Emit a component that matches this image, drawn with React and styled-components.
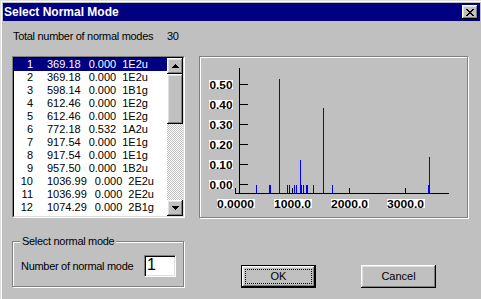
import React from 'react';
import styled, { createGlobalStyle } from 'styled-components';

const Global = createGlobalStyle`
  html, body { margin: 0; padding: 0; background: #c0c0c0; }
  body { font-family: "Liberation Sans", Arial, sans-serif; font-size: 11px; color: #000; }
`;

const modes = [
  [1, '369.18', '0.000', '1E2u'],
  [2, '369.18', '0.000', '1E2u'],
  [3, '598.14', '0.000', '1B1g'],
  [4, '612.46', '0.000', '1E2g'],
  [5, '612.46', '0.000', '1E2g'],
  [6, '772.18', '0.532', '1A2u'],
  [7, '917.54', '0.000', '1E1g'],
  [8, '917.54', '0.000', '1E1g'],
  [9, '957.50', '0.000', '1B2u'],
  [10, '1036.99', '0.000', '2E2u'],
  [11, '1036.99', '0.000', '2E2u'],
  [12, '1074.29', '0.000', '2B1g'],
  [13, '1140.22', '0.123', '1E1u'],
  [14, '1140.22', '0.123', '1E1u'],
  [15, '1156.20', '0.000', '1A1g'],
  [16, '1192.87', '0.000', '2E2g'],
  [17, '1250.11', '0.000', '2E2g'],
  [18, '1262.40', '0.000', '1B2g'],
  [19, '1369.55', '0.000', '2B2u'],
  [20, '1545.06', '0.385', '1A2u'],
  [21, '1704.33', '0.000', '3E2g'],
  [22, '1704.33', '0.000', '3E2g'],
  [23, '3401.52', '0.000', '3E2g'],
  [24, '3401.52', '0.000', '3E2g'],
  [25, '3404.18', '0.000', '2B1u'],
  [26, '3411.90', '0.000', '3B1g'],
  [27, '3413.65', '0.138', '2E1u'],
  [28, '3413.65', '0.138', '2E1u'],
  [29, '3417.02', '0.000', '2A1g'],
  [30, '3417.02', '0.000', '3E2g'],
];

const Window = styled.div`
  width: 481px;
  height: 299px;
  box-sizing: border-box;
  padding: 3px 1px 0 3px;
  background: #c0c0c0;
  box-shadow: inset 1px 1px #dfdfdf, inset 2px 2px #fff;
  overflow: hidden;
  display: flex;
  flex-direction: column;
`;

const TitleBar = styled.div`
  height: 18px;
  flex: none;
  background: #000080;
  display: flex;
  align-items: center;
  justify-content: space-between;
  padding: 0 2px 0 1px;
`;

const TitleText = styled.span`
  color: #fff;
  font-weight: bold;
  font-size: 12px;
  line-height: 18px;
`;

const Bevel = `
  background: #c0c0c0;
  box-shadow: inset -1px -1px #000, inset 1px 1px #fff, inset -2px -2px #808080, inset 2px 2px #dfdfdf;
`;

const CloseButton = styled.div`
  width: 16px;
  height: 14px;
  ${Bevel}
  display: flex;
  align-items: center;
  justify-content: center;
`;

const Body = styled.div`
  padding-left: 9px;
  display: flex;
  flex-direction: column;
`;

const Label = styled.span`
  letter-spacing: -0.3px;
  line-height: 13px;
  white-space: nowrap;
`;

const Header = styled.div`
  margin-top: 9px;
  padding-left: 1px;
  display: flex;
  line-height: 13px;
`;

const HeaderLabel = styled(Label)`
  width: 154px;
  flex: none;
`;

const Main = styled.div`
  margin-top: 13px;
  display: flex;
`;

const LeftCol = styled.div`
  width: 173px;
  display: flex;
  flex-direction: column;
`;

const ListOuter = styled.div`
  height: 162px;
  box-sizing: border-box;
  border: 1px solid;
  border-color: #808080 #fff #fff #808080;
  display: flex;
`;

const ListInner = styled.div`
  flex: 1;
  border: 1px solid;
  border-color: #000 #dfdfdf #dfdfdf #000;
  background: #fff;
  display: flex;
  overflow: hidden;
`;

const Rows = styled.div`
  flex: 1;
  overflow: hidden;
`;

const Row = styled.div`
  height: 13px;
  line-height: 13px;
  display: flex;
  white-space: nowrap;
  background: ${p => (p.$selected ? '#000080' : 'transparent')};
  color: ${p => (p.$selected ? '#fff' : '#000')};
`;

const NumCell = styled.span`
  width: 19px;
  text-align: right;
  flex: none;
`;

const FreqCell = styled.span`
  margin-left: 14px;
`;

const IntCell = styled.span`
  margin-left: 8px;
`;

const SymCell = styled.span`
  margin-left: 6px;
`;

const ScrollBar = styled.div`
  width: 16px;
  flex: none;
  display: flex;
  flex-direction: column;
`;

const ScrollButton = styled.div`
  width: 16px;
  height: 16px;
  flex: none;
  ${Bevel}
  display: flex;
  align-items: center;
  justify-content: center;
`;

const Thumb = styled.div`
  height: 50px;
  flex: none;
  ${Bevel}
`;

const Track = styled.div`
  flex: 1;
  background: repeating-conic-gradient(#c0c0c0 0 25%, #fff 0 50%) 0 0 / 2px 2px;
`;

const GroupBox = styled.div`
  position: relative;
  margin-top: 23px;
  width: 172px;
  height: 46px;
  box-sizing: border-box;
  border: 1px solid #808080;
  box-shadow: inset 1px 1px #fff, 1px 1px #fff;
`;

const GroupLabel = styled(Label)`
  position: absolute;
  top: -7px;
  left: 7px;
  padding: 0 2px;
  background: #c0c0c0;
`;

const GroupRow = styled.div`
  display: flex;
  align-items: center;
  padding: 13px 0 0 8px;
`;

const FieldLabel = styled(Label)`
  width: 123px;
  flex: none;
`;

const TextField = styled.div`
  width: 32px;
  height: 22px;
  box-sizing: border-box;
  border: 1px solid;
  border-color: #808080 #fff #fff #808080;
  box-shadow: inset 1px 1px #000, inset -1px -1px #dfdfdf;
  background: #fff;
  padding: 0 0 0 2px;
  font-size: 16px;
  line-height: 17px;
`;

const RightCol = styled.div`
  margin-left: 14px;
  display: flex;
  flex-direction: column;
`;

const ChartPanel = styled.div`
  width: 269px;
  height: 162px;
  box-sizing: border-box;
  border: 1px solid #808080;
  box-shadow: inset 1px 1px #fff, 1px 1px #fff;
`;

const ChartSvg = styled.svg`
  display: block;
`;

const ButtonRow = styled.div`
  margin-top: 47px;
  padding-left: 42px;
  display: flex;
  gap: 45px;
`;

const Button = styled.div`
  position: relative;
  width: 75px;
  height: 23px;
  box-sizing: border-box;
  ${Bevel}
  ${p => p.$default && `
    border: 1px solid #000;
  `}
  display: flex;
  align-items: center;
  justify-content: center;
  line-height: 13px;
`;

const FocusRing = styled.span`
  position: absolute;
  inset: 3px;
  border: 1px dotted #000;
`;

const ty = v => 183.5 - v * 199;
const fx = f => 235.7 + f * 0.05667;

function UpArrow() {
  return (
    <svg width="7" height="4" viewBox="0 0 7 4">
      <rect x="3" y="0" width="1" height="1" />
      <rect x="2" y="1" width="3" height="1" />
      <rect x="1" y="2" width="5" height="1" />
      <rect x="0" y="3" width="7" height="1" />
    </svg>
  );
}

function DownArrow() {
  return (
    <svg width="7" height="4" viewBox="0 0 7 4">
      <rect x="0" y="0" width="7" height="1" />
      <rect x="1" y="1" width="5" height="1" />
      <rect x="2" y="2" width="3" height="1" />
      <rect x="3" y="3" width="1" height="1" />
    </svg>
  );
}

function Chart() {
  const yTicks = [0.5, 0.4, 0.3, 0.2, 0.1, 0.0];
  const xTicks = [
    ['0.0000', 235.5],
    ['1000.0', 292.5],
    ['2000.0', 349.5],
    ['3000.0', 405.5],
  ];
  const font = { fontFamily: '"Liberation Sans", Arial, sans-serif', fontWeight: 'bold', fontSize: 11 };
  return (
    <ChartSvg width="267" height="160" viewBox="0 0 267 160">
      <g transform="translate(-200 -57)" shapeRendering="crispEdges">
        <rect x="239" y="68" width="1" height="126" fill="#000" />
        <rect x="235" y="193" width="214" height="1" fill="#000" />
        {yTicks.map(v => {
          const y = Math.round(ty(v));
          return (
            <g key={v}>
              <rect x="240" y={y} width="8" height="1" fill="#000" />
              <rect x="209" y={y - 4} width="24" height="9" fill="#fff" />
              <text x="221" y={y + 4.5} textAnchor="middle" textLength="23" lengthAdjust="spacingAndGlyphs" style={font}>
                {v.toFixed(2)}
              </text>
            </g>
          );
        })}
        {xTicks.map(([label, x]) => (
          <g key={label}>
            <rect x={Math.floor(x)} y="188" width="1" height="5" fill="#000" />
            <rect x={x - 19} y="199" width="38" height="9" fill="#fff" />
            <text x={x} y="207.5" textAnchor="middle" textLength="37" lengthAdjust="spacingAndGlyphs" style={font}>
              {label}
            </text>
          </g>
        ))}
        {modes.map(([n, f, v]) => {
          const x = Math.floor(fx(parseFloat(f)));
          const top = Math.round(ty(parseFloat(v))) + 1;
          return <rect key={n} x={x} y={top} width="1" height={193 - top} fill="#0000ff" />;
        })}
      </g>
    </ChartSvg>
  );
}

export default function App() {
  return (
    <>
      <Global />
      <Window>
        <TitleBar>
          <TitleText>Select Normal Mode</TitleText>
          <CloseButton>
            <svg width="8" height="7" viewBox="0 0 8 7" shapeRendering="crispEdges">
              <path d="M0 0h2v1h1v1h2V1h1V0h2v1H7v1H6v1H5v1h1v1h1v1h1v1H6V6H5V5H3v1H2v1H0V6h1V5h1V4h1V3H2V2H1V1H0z" fill="#000" />
            </svg>
          </CloseButton>
        </TitleBar>
        <Body>
          <Header>
            <HeaderLabel>Total number of normal modes</HeaderLabel>
            <Label>30</Label>
          </Header>
          <Main>
            <LeftCol>
              <ListOuter>
                <ListInner>
                  <Rows>
                    {modes.map(([n, f, v, s]) => (
                      <Row key={n} $selected={n === 1}>
                        <NumCell>{n}</NumCell>
                        <FreqCell>{f}</FreqCell>
                        <IntCell>{v}</IntCell>
                        <SymCell>{s}</SymCell>
                      </Row>
                    ))}
                  </Rows>
                  <ScrollBar>
                    <ScrollButton><UpArrow /></ScrollButton>
                    <Thumb />
                    <Track />
                    <ScrollButton><DownArrow /></ScrollButton>
                  </ScrollBar>
                </ListInner>
              </ListOuter>
              <GroupBox>
                <GroupLabel>Select normal mode</GroupLabel>
                <GroupRow>
                  <FieldLabel>Number of normal mode</FieldLabel>
                  <TextField>1</TextField>
                </GroupRow>
              </GroupBox>
            </LeftCol>
            <RightCol>
              <ChartPanel>
                <Chart />
              </ChartPanel>
              <ButtonRow>
                <Button $default>
                  <FocusRing />
                  OK
                </Button>
                <Button>Cancel</Button>
              </ButtonRow>
            </RightCol>
          </Main>
        </Body>
      </Window>
    </>
  );
}
